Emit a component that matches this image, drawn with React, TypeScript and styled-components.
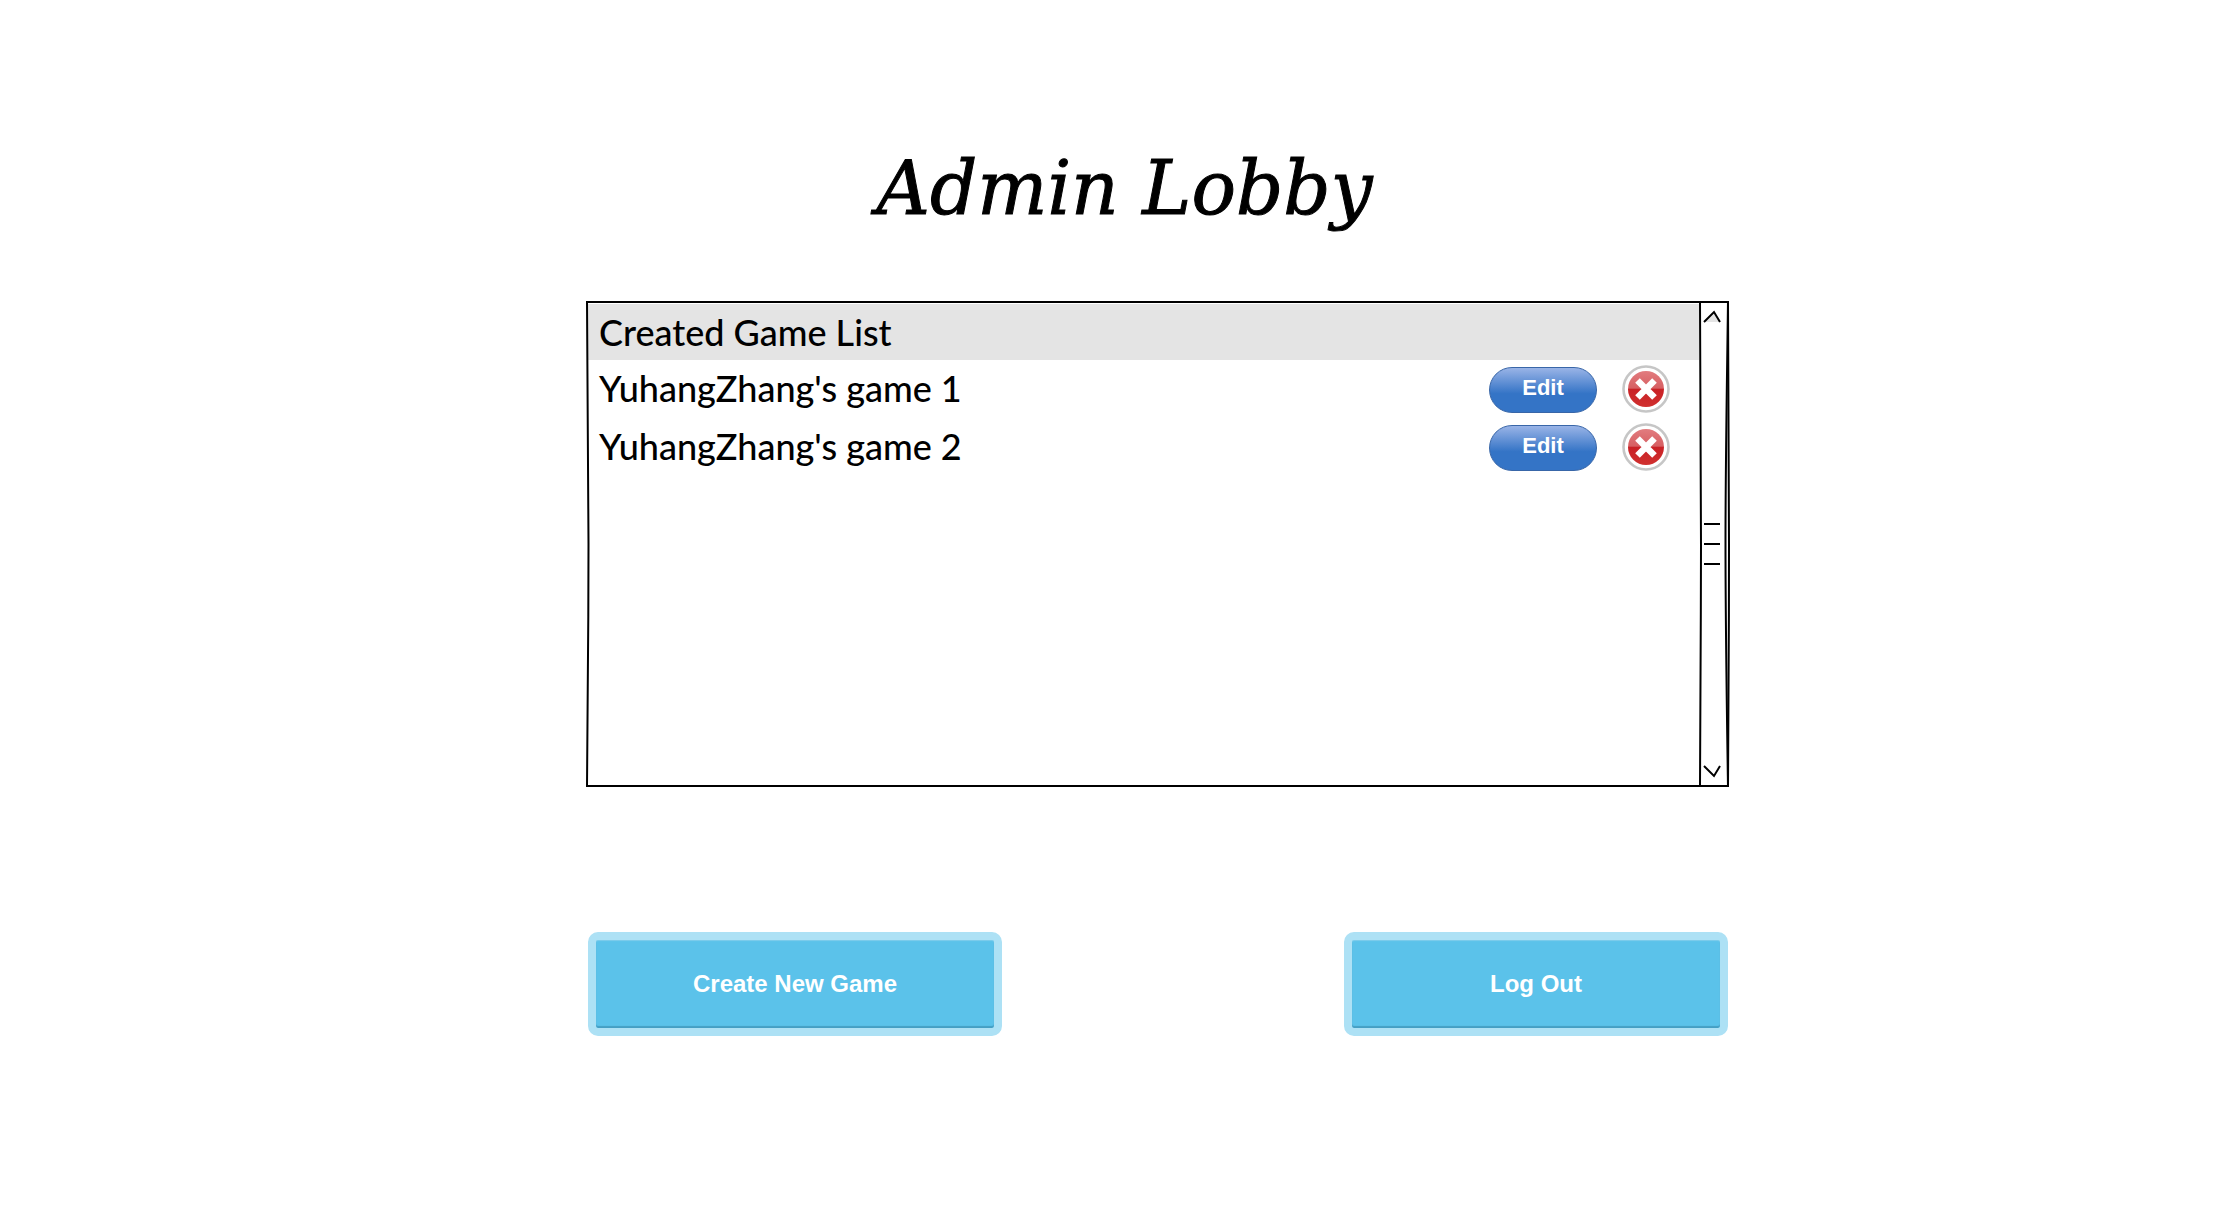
import React from 'react';
import styled, { createGlobalStyle } from 'styled-components';

const GlobalStyle = createGlobalStyle`
  *, *::before, *::after { box-sizing: border-box; }
  body { margin: 0; background: #fff; color: #000; }
  button { margin: 0; padding: 0; border: 0; background: none; cursor: pointer; }
`;

const Page = styled.div`
  display: grid;
  grid-template-columns: 586fr 1143fr 487fr;
  min-height: 100vh;
  padding: 140px 0;
  align-content: start;
`;

const Main = styled.main`
  grid-column: 2;
  display: flex;
  flex-direction: column;
`;

const Title = styled.h1`
  margin: 0 0 65px;
  padding-right: 66px;
  font: italic 400 74px/96px 'American Typewriter', 'DejaVu Serif', serif;
  -webkit-text-stroke: 1px #000;
  text-align: center;
  white-space: nowrap;
`;

const Panel = styled.section`
  position: relative;
  display: grid;
  grid-template-columns: 1fr 28px;
  min-height: 486px;
  padding: 2px;
`;

const Outline = styled.svg`
  position: absolute;
  inset: 0;
  width: 100%;
  height: 100%;
  pointer-events: none;
  overflow: visible;
`;

const Games = styled.div`
  padding-top: 1px;
  font-family: 'Comic Sans MS', Lato, sans-serif;
  font-weight: 500;
`;

const ListHeading = styled.h2`
  margin: 0;
  padding-left: 11px;
  background: #e4e4e4;
  font: inherit;
  font-size: 36px;
  line-height: 56px;
`;

const GameList = styled.ul`
  margin: 0;
  padding: 0;
  list-style: none;
`;

const GameRow = styled.li`
  display: flex;
  align-items: center;
  height: 58px;
  padding: 0 29px 0 11px;
`;

const GameName = styled.span`
  flex: 1;
  font-size: 36px;
  line-height: 56px;
  padding-bottom: 2px;
`;

const EditButton = styled.button`
  width: 108px;
  height: 46px;
  && {
    margin: 2px 25px 0 0;
    padding-bottom: 4px;
    border: 1px solid #3866a8;
    background: linear-gradient(#9db6e8 0%, #3474c6 58%, #3474c6 100%) border-box;
  }
  border-radius: 23px;
  color: #fff;
  font: bold 22px/26px 'Liberation Sans', Arial, sans-serif;
`;

const DeleteButton = styled.button`
  width: 48px;
  height: 48px;
  svg { display: block; }
`;

const ScrollBar = styled.div`
  display: flex;
  flex-direction: column;
  align-items: flex-start;
  justify-content: space-between;
  padding: 6px 4px;
`;

const ScrollButton = styled.button`
  width: 20px;
  height: 16px;
  svg { display: block; }
`;

const Grip = styled.div`
  display: grid;
  gap: 18px;
  width: 16px;
  margin-left: 1px;
  span { height: 2px; background: #000; }
`;

const Actions = styled.div`
  display: flex;
  justify-content: space-between;
  margin-top: 145px;
  padding: 0 1px 0 2px;
`;

const ActionButton = styled.button<{ $width: number }>`
  width: ${(p) => p.$width}px;
  height: 104px;
  && {
    border: 8px solid #ade1f5;
    background: #5bc2ea;
  }
  border-radius: 10px;
  box-shadow: inset 0 -2px 1px #459fc4, inset 0 1px 1px #7fcdec;
  color: #fff;
  font: bold 24px/28px 'Liberation Sans', Arial, sans-serif;
`;

const games = ["YuhangZhang's game 1", "YuhangZhang's game 2"];

function CrossIcon({ id }: { id: string }) {
  return (
    <svg width="48" height="48" viewBox="0 0 48 48" aria-hidden="true">
      <defs>
        <linearGradient id={id} x1="0" y1="0" x2="0" y2="1">
          <stop offset="0" stopColor="#e27c7f" />
          <stop offset="0.48" stopColor="#d65f62" />
          <stop offset="0.5" stopColor="#c92126" />
          <stop offset="1" stopColor="#d0302f" />
        </linearGradient>
      </defs>
      <circle cx="24" cy="24" r="22.5" fill="#fff" stroke="#c6c6c6" strokeWidth="2.6" />
      <circle cx="24" cy="24" r="18" fill={`url(#${id})`} />
      <path d="M15.5 15.5 32.5 32.5M32.5 15.5 15.5 32.5" stroke="#fff" strokeWidth="6.5" />
    </svg>
  );
}

export default function App() {
  return (
    <>
      <GlobalStyle />
      <Page>
        <Main>
          <Title>Admin Lobby</Title>
          <Panel>
            <Games>
              <ListHeading>Created Game List</ListHeading>
              <GameList>
                {games.map((name, i) => (
                  <GameRow key={name}>
                    <GameName>{name}</GameName>
                    <EditButton type="button">Edit</EditButton>
                    <DeleteButton type="button" aria-label={`Delete ${name}`}>
                      <CrossIcon id={`cross-${i}`} />
                    </DeleteButton>
                  </GameRow>
                ))}
              </GameList>
            </Games>
            <ScrollBar>
              <ScrollButton type="button" aria-label="Scroll up">
                <svg width="20" height="16" viewBox="0 0 20 16">
                  <path d="M1 13 11 3 17 13" fill="#e4e4e4" stroke="#000" strokeWidth="2" />
                </svg>
              </ScrollButton>
              <Grip><span /><span /><span /></Grip>
              <ScrollButton type="button" aria-label="Scroll down">
                <svg width="20" height="16" viewBox="0 0 20 16">
                  <path d="M1 3 11 13 17 3" fill="none" stroke="#000" strokeWidth="2" />
                </svg>
              </ScrollButton>
            </ScrollBar>
            <Outline viewBox="0 0 1143 486" preserveAspectRatio="none" aria-hidden="true">
              <g fill="none" stroke="#000" strokeWidth="2">
                <path d="M0 1H1143" />
                <path d="M0 485H1143" />
                <path d="M1 0C1.500 80 2.500 160 2.500 243S1.500 420 1 486" />
                <path d="M1142 0C1142.500 80 1143 160 1143 243S1142.500 420 1142 486" />
                <path d="M1142 0C1141 80 1139.500 160 1139.500 243S1141 420 1142 486" />
                <path d="M1114 1C1114 80 1115 160 1115 243S1114 420 1114 485" />
              </g>
            </Outline>
          </Panel>
          <Actions>
            <ActionButton type="button" $width={414}>Create New Game</ActionButton>
            <ActionButton type="button" $width={384}>Log Out</ActionButton>
          </Actions>
        </Main>
      </Page>
    </>
  );
}
